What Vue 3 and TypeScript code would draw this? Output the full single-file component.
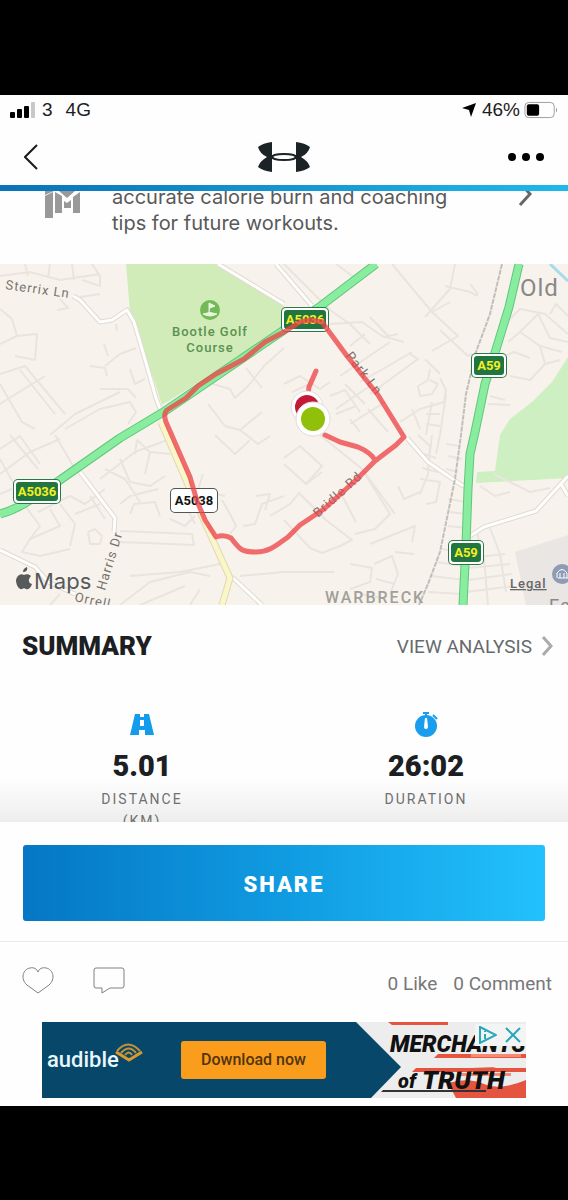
<script setup lang="ts">
interface Stat {
  id: 'distance' | 'duration'
  value: string
  label: string
  unit: string
}

interface RoadSign {
  x: number
  y: number
  width: number
  code: string
  primary: boolean
}

const stats: Stat[] = [
  { id: 'distance', value: '5.01', label: 'DISTANCE', unit: '(KM)' },
  { id: 'duration', value: '26:02', label: 'DURATION', unit: '' },
]

const signs: RoadSign[] = [
  { x: 281, y: 43, width: 48, code: 'A5036', primary: true },
  { x: 471, y: 89, width: 36, code: 'A59', primary: true },
  { x: 13, y: 215, width: 48, code: 'A5036', primary: true },
  { x: 170, y: 224, width: 48, code: 'A5038', primary: false },
  { x: 448, y: 276, width: 36, code: 'A59', primary: true },
]

const streets: string[] = [
  'M0 12L30 8 60 16 100 10M25 0L28 12M50 0L48 14M72 0L74 16M92 0L100 12 100 22 82 16M100 30L80 33M60 35L68 44 57 46M116 60L117 67',
  'M0 45L12 55 17 72 0 80M17 72L37 70 35 96 15 92M90 102L105 104 107 112M105 102L120 90 136 84M104 80L108 92',
  'M0 110L25 102 65 150M0 140L45 112M20 106L55 150M0 120L22 158 35 165M50 171L75 150 120 128M65 165L100 145 130 138 136 148 128 160M100 125L128 125 136 134M130 105L135 120 145 115',
  'M0 185L20 172 40 200M0 210L30 188 60 175M10 171L38 205M55 171L75 205M0 195L15 222M0 230L12 225M20 235L40 262 30 275 22 288 40 292 70 285M38 248L70 232 85 240 105 225M60 240L75 260 70 282M50 245L60 262 30 275M90 232L105 255M75 250L100 240',
  'M100 215L135 188 170 175M105 205L125 215 140 238M120 195L130 218 150 222 165 212M135 190L137 176 150 188 145 210M150 188L170 190M120 240L130 232 158 225M130 250L134 240 155 238 160 252M88 268L95 265 102 272 100 280 90 280 88 268M120 267L192 270 194 281 120 278M170 255L185 262 195 252M185 240L195 260',
  'M130 312L180 308 220 300M120 341L150 318 190 308 210 312M140 341L185 322M50 341L60 330M190 341L200 325M240 312L284 308 334 308',
  'M213 120L230 125 235 134 248 122 264 102 284 84M246 104L262 124M208 140L225 162 240 166 262 148M215 171L235 190 250 176M240 166L258 180 270 172',
  'M222 236L230 250 236 262 230 270M203 210L198 226 225 232M243 262L255 260 262 240 284 232M256 232L270 230 265 246M270 252L290 240 300 228',
  'M284 0L330 46 350 60 370 80M336 0L355 14 372 0M392 0L432 48 458 72 432 87M455 0L450 25 425 53M470 20L478 30M432 48L450 38M445 22L470 28 478 32M440 66L468 92 472 90',
  'M330 60L362 58 382 72 404 78M370 53L388 72 398 70 M350 82L365 70M340 112L365 95 390 78M360 118L395 98 412 88M370 130L418 95 410 90M345 120L365 140M336 145L370 122M350 160L385 138M430 105L428 116 418 122 420 132 432 130 438 120 430 116M425 95L440 110',
  'M440 114L446 126 444 138 420 145 400 158M446 130L440 171M432 138L426 171M412 145L420 165M440 150L426 150M440 162L426 160M284 120L300 112 320 125 330 118M292 128L310 120M330 132L345 126 360 148M336 150L356 142M368 145L388 168M350 155L360 168',
  'M510 55L520 45 545 50 568 70M508 78L520 68 540 82 545 100 530 116 510 112M520 68L538 50 550 74 568 78M540 82L562 88M498 95L514 88 530 94M488 140L510 141M550 50L556 40 568 52M490 132L505 136M545 100L560 96',
  'M284 194L300 182 322 202 306 220 284 200M306 220L322 208M320 171L362 205 390 250 375 265 355 270M300 230L326 256 352 276 340 282 322 289 310 284 284 256M362 205L395 250M340 228L356 258M370 280L415 262 412 278M395 288L414 290',
  'M350 300L372 304 370 318 350 325M374 300L392 292 398 310 390 330M376 315L395 320M360 330L382 334M398 222L404 235 420 228M418 171L430 182 428 210 420 230M432 171L428 205M440 171L436 190M420 215L440 218 436 238 426 240M424 190L436 194M422 204L438 208',
  'M446 180L460 182M448 192L462 195M446 205L458 208M448 235L466 238M450 248L466 250M448 262L466 264M440 285L464 288M436 298L464 302M432 312L464 316M428 328L462 330M470 294L505 290M468 304L510 300M468 316L512 310M466 328L514 322M478 270L480 292M490 264L500 290M484 294L488 341M500 290L506 328M480 222L495 232 510 228M494 210L510 218 530 228 550 224',
]

function signTextX(sign: RoadSign): number {
  return sign.x + sign.width / 2
}
</script>

<template>
  <div class="screen">
    <div class="phone">
      <header class="top">
        <div class="status">
          <div class="status-group">
            <svg class="signal" viewBox="0 0 26 16" aria-hidden="true">
              <rect x="0" y="10" width="5" height="6" rx="1" />
              <rect x="7" y="7" width="5" height="9" rx="1" />
              <rect x="14" y="4" width="5" height="12" rx="1" />
              <rect x="21" y="0" width="4" height="16" rx="1" fill="#c8c8c8" />
            </svg>
            <span>3</span>
            <span class="network">4G</span>
          </div>
          <div class="status-group">
            <svg class="locator" viewBox="0 0 14 14" aria-hidden="true"><path d="M14 0L9 14 7 7 0 5z" /></svg>
            <span class="percent">46%</span>
            <svg class="battery" viewBox="0 0 36 18" aria-hidden="true">
              <rect x="1" y="1" width="31" height="16" rx="4" fill="none" stroke="#999" />
              <rect x="3" y="3" width="13" height="12" rx="2" />
              <path d="M34 6q2 3 0 6z" fill="#888" />
            </svg>
          </div>
        </div>
        <nav class="nav">
          <button type="button" class="icon-button" aria-label="Back">
            <svg class="back" viewBox="0 0 14 26"><path d="M13 1L1 13 13 25" fill="none" stroke="#171b1d" stroke-width="2" /></svg>
          </button>
          <svg class="brand" viewBox="0 0 54 32" role="img" aria-label="Under Armour">
            <path d="M15 1Q6 2 1 6 3 13 10 16 3 20 1 26 6 30 15 31V18L17 16 15 14zM39 1Q48 2 53 6 51 13 44 16 51 20 53 26 48 30 39 31V18L37 16 39 14z" fill="#1c2326" />
            <ellipse cx="27" cy="16" rx="12" ry="3" fill="none" stroke="#1c2326" stroke-width="2" />
          </svg>
          <button type="button" class="icon-button" aria-label="More options">
            <svg class="more" viewBox="0 0 36 8"><circle cx="4" cy="4" r="4" /><circle cx="18" cy="4" r="4" /><circle cx="32" cy="4" r="4" /></svg>
          </button>
        </nav>
      </header>

      <section class="tip">
        <svg class="tip-icon" viewBox="0 0 36 32" aria-hidden="true">
          <path d="M0 10L8 6V32H0zM10 6L17 10V27H10zM19 15L22 17 26 14V22H19zM28 11L35 6V27H28zM0 5H9L0 9zM14 5H30L22 12z" fill="#999" />
        </svg>
        <p class="tip-text">accurate calorie burn and coaching tips for future workouts.</p>
        <svg class="tip-arrow" viewBox="0 0 14 24" aria-hidden="true"><path d="M2 1L12 12 2 23" fill="none" stroke="#666" stroke-width="3" /></svg>
      </section>

      <svg class="map" viewBox="0 0 568 341" role="img" aria-label="Workout route map">
        <rect width="568" height="341" fill="#f7f3ec" />
        <path d="M126 0H218L284 42 284 66 162 141 154 116 142 84 130 48z" fill="#d1ecb9" />
        <path d="M568 93L552 118 532 138 510 155 500 171 495 207 477 208 476 219 568 214z" fill="#cdefc1" />
        <path d="M568 271L515 288 526 341H568z" fill="#e9e6e3" />
        <path d="M550 0L568 17" stroke="#a6daec" stroke-width="3" />

        <g fill="none" stroke="#e9e5de" stroke-width="2" stroke-linejoin="round">
          <path v-for="street in streets" :key="street" :d="street" />
        </g>

        <g fill="none" stroke-linejoin="round">
          <path d="M73 32L80 36 100 58 112 56 127 46 134 58 144 92 156 134 162 150M276 0L312 42M218 0L284 40M80 208L115 254 114 268M0 286L35 303 48 318 75 330M407 174L428 198 460 220 466 223M470 272L484 263 536 247 568 212M561 220L568 232M232 313L262 341" stroke="#dedad4" stroke-width="5" />
          <path d="M73 32L80 36 100 58 112 56 127 46 134 58 144 92 156 134 162 150M276 0L312 42M218 0L284 40M80 208L115 254 114 268M0 286L35 303 48 318 75 330M407 174L428 198 460 220 466 223M470 272L484 263 536 247 568 212M561 220L568 232M232 313L262 341" stroke="#fffefb" stroke-width="3" />
          <path d="M161 158L192 230 230 314 222 341" stroke="#ded9b6" stroke-width="7" />
          <path d="M161 158L192 230 230 314 222 341" stroke="#fbf6c8" stroke-width="5" />
          <path d="M502 0L490 50 476 88 466 130 461 171 455 215 440 288 428 320 419 341" stroke="#c2bfbb" stroke-width="2" stroke-dasharray="5 1" />
          <path d="M0 250Q15 246 30 236T60 216L120 174 165 147 284 66 318 44 376 0" stroke="#62c57d" stroke-width="9" />
          <path d="M0 250Q15 246 30 236T60 216L120 174 165 147 284 66 318 44 376 0" stroke="#89eda0" stroke-width="7" />
          <path d="M519 0L509 43 494 92 485 120 475 168 470 190 468 225 466 280 463 341" stroke="#62c57d" stroke-width="9" />
          <path d="M519 0L509 43 494 92 485 120 475 168 470 190 468 225 466 280 463 341" stroke="#89eda0" stroke-width="7" />
        </g>

        <circle cx="210" cy="46" r="10" fill="#73b957" />
        <path d="M209 51V39L215 42 210 44M203 50Q210 47 217 50 210 54 203 50" fill="#e8f5df" stroke="#e8f5df" />

        <g class="place">
          <text x="210" y="72">Bootle Golf</text>
          <text x="210" y="88">Course</text>
        </g>

        <g v-for="sign in signs" :key="`${sign.code}-${sign.x}`">
          <rect :x="sign.x" :y="sign.y" :width="sign.width" height="25" rx="5" :fill="sign.primary ? '#28784a' : '#555'" />
          <rect :x="sign.x + 1" :y="sign.y + 1" :width="sign.width - 2" height="23" rx="4" fill="#fff" />
          <rect v-if="sign.primary" :x="sign.x + 3" :y="sign.y + 3" :width="sign.width - 6" height="19" rx="3" fill="#21763f" />
          <text class="sign" :x="signTextX(sign)" :y="sign.y + 17" :fill="sign.primary ? '#f4ee25' : '#111'">{{ sign.code }}</text>
        </g>

        <g class="street">
          <text transform="translate(5 25) rotate(8)">Sterrix Ln</text>
          <text transform="translate(345 92) rotate(52)">Park Ln</text>
          <text transform="translate(318 254) rotate(-42)">Bridle Rd</text>
          <text transform="translate(105 327) rotate(-73)">Harris Dr</text>
          <text transform="translate(74 337) rotate(12)">Orrell</text>
        </g>

        <path d="M322 58L310 56 300 58 284 68 265 78 244 95 216 110 198 122 186 134 167 146Q163 150 166 158L190 213 197 237 205 256 216 273Q224 270 231 274C240 286 242 288 256 288 270 288 278 280 288 273L300 261 324 245 356 216 375 197 396 181 404 173 378 131 347 92 322 58M375 196Q370 188 358 183L340 178 325 171M316 107L309 123 307 138" fill="none" stroke="#ee4448" stroke-opacity=".78" stroke-width="5" stroke-linecap="round" stroke-linejoin="round" />

        <text class="town" x="520" y="32">Old</text>
        <text class="district" x="325" y="339">WARBRECK</text>
        <text class="town small" x="549" y="348">Ea</text>
        <circle cx="562" cy="310" r="10" fill="#8d9bb7" />
        <path d="M557 314V309Q562 302 567 309V314M558 314H568M560 309V314M564 309V314" fill="none" stroke="#fff" />

        <circle cx="307" cy="143" r="16" fill="#fff" stroke="#ddd" />
        <circle cx="307" cy="143" r="12" fill="#c51938" />
        <circle cx="313" cy="155" r="17" fill="#fff" stroke="#ddd" />
        <circle cx="313" cy="155" r="12" fill="#91c00b" />

        <path d="M24 311c2-1 5-1 7 1-3 3-3 7 1 8-1 4-4 6-6 5-2-1-2-1-4 0-3 1-6-4-6-9 1-5 5-7 8-5zM23 308c0-3 2-4 4-5 1 3-1 5-4 5z" fill="#58595b" />
        <text class="attribution" x="34" y="325">Maps</text>
        <a href="#legal"><text class="legal" x="510" y="324">Legal</text></a>
      </svg>

      <main class="summary">
        <div class="summary-head">
          <h1>SUMMARY</h1>
          <a href="#analysis" class="analysis">
            VIEW ANALYSIS
            <svg class="chevron" viewBox="0 0 12 20" aria-hidden="true"><path d="M2 1L10 10 2 19" fill="none" stroke="#aaa" stroke-width="3" /></svg>
          </a>
        </div>
        <div class="stats">
          <div v-for="stat in stats" :key="stat.id" class="stat">
            <svg v-if="stat.id === 'distance'" class="stat-icon" viewBox="0 0 24 26" aria-hidden="true">
              <path d="M5 2H10V5H14V2H19L24 23H15V18H9V23H0zM10 8V14H14V8z" fill="#129ceb" fill-rule="evenodd" />
            </svg>
            <svg v-else class="stat-icon" viewBox="0 0 24 26" aria-hidden="true">
              <circle cx="12" cy="14" r="11" fill="#189eec" />
              <path d="M9 1H15M12 1V5M19 3L23 7" stroke="#189eec" stroke-width="2" />
              <path d="M11 6H13L14 15A2 2 0 0 1 10 15z" fill="#fff" />
            </svg>
            <strong>{{ stat.value }}</strong>
            <span class="stat-label">{{ stat.label }}<br />{{ stat.unit }}</span>
          </div>
        </div>
      </main>

      <div class="share-panel">
        <button type="button" class="share">SHARE</button>
      </div>

      <section class="social">
        <button type="button" class="icon-button" aria-label="Like">
          <svg class="heart" viewBox="0 0 32 28"><path d="M16 26L5 18C-2 12 1 2 8 1 12 0 15 2 16 5 17 2 20 0 24 1 31 2 34 12 27 18z" fill="none" stroke="#808080" /></svg>
        </button>
        <button type="button" class="icon-button" aria-label="Comment">
          <svg class="bubble" viewBox="0 0 32 28"><path d="M3 1H29Q31 1 31 3V19Q31 21 29 21H17L9 26V21H3Q1 21 1 19V3Q1 1 3 1z" fill="none" stroke="#808080" /></svg>
        </button>
        <div class="counts"><span>0 Like</span><span>0 Comment</span></div>
      </section>

      <aside class="ad">
        <div class="ad-brand">
          <span>audible</span>
          <svg class="ad-mark" viewBox="0 0 28 20" aria-hidden="true">
            <path d="M1 9L14 17 27 9" fill="none" stroke="#d99a2c" stroke-width="3" />
            <path d="M2 8Q13-5 25 8M6 10Q14 1 21 10M10 12Q14 7 17 12" fill="none" stroke="#c59138" stroke-width="2" />
          </svg>
        </div>
        <a href="#download" class="download">Download now</a>
        <div class="book">
          <svg class="cover" viewBox="0 0 170 76" role="img" aria-label="Merchants of Truth">
            <path d="M0 0H170V76H15L45 45z" fill="#ededed" />
            <path d="M32 0H92V3H36zM82 32H170V36H78zM60 46H170V50H56zM92 61Q112 55 128 62T170 58V76H100z" fill="#e4543f" />
            <path d="M105 51H155V54H100zM115 32H165V35H115z" fill="#f58b75" />
            <path d="M27 68H130V70H25z" fill="#333" />
            <g class="cover-title">
              <text x="34" y="30">MERCHANTS</text>
              <text class="of" x="42" y="66">of</text>
              <text class="truth" x="66" y="67">TRUTH</text>
            </g>
            <path d="M92 47L137 45 150 49 88 50z" fill="#e4543f" fill-opacity=".8" />
          </svg>
          <div class="ad-controls">
            <button type="button" aria-label="About this ad">
              <svg viewBox="0 0 18 18"><path d="M1 1L17 9 1 17zM6 8V13M6 5V6" fill="none" stroke="#27a9bb" stroke-width="2" /></svg>
            </button>
            <button type="button" aria-label="Close ad">
              <svg viewBox="0 0 18 18"><path d="M2 2L16 16M16 2L2 16" fill="none" stroke="#27a9bb" stroke-width="2" /></svg>
            </button>
          </div>
        </div>
      </aside>
    </div>
  </div>
</template>

<style>
body {
  margin: 0;
  background: #000;
}
</style>

<style scoped>
* {
  box-sizing: border-box;
}
.screen {
  padding: 95px 0;
  background: #000;
  color: #1c2022;
  font-family: Inter, "Liberation Sans", sans-serif;
}
.phone {
  background: #fefefe;
  overflow: hidden;
  padding-bottom: 8px;
}
svg {
  display: block;
  flex-shrink: 0;
}
.icon-button,
.ad-controls button {
  padding: 0;
  border: 0;
  background: none;
  cursor: pointer;
}
.top {
  border-bottom: 6px solid;
  border-image: linear-gradient(90deg, #0a72b8, #1fb8ec) 1;
}
.status {
  display: flex;
  justify-content: space-between;
  align-items: center;
  height: 30px;
  padding: 0 10px;
  font: 19px/30px "Liberation Sans", sans-serif;
}
.status-group {
  display: flex;
  align-items: center;
}
.signal {
  width: 26px;
  height: 16px;
  margin-right: 6px;
}
.network {
  margin-left: 13px;
}
.locator {
  width: 14px;
  height: 14px;
  margin-right: 6px;
}
.percent {
  margin-right: 4px;
}
.battery {
  width: 34px;
  height: 18px;
}
.nav {
  display: flex;
  justify-content: space-between;
  align-items: center;
  height: 60px;
  padding: 4px 24px 0;
}
.back {
  width: 14px;
  height: 26px;
}
.brand {
  width: 54px;
  height: 32px;
  margin-left: 22px;
}
.more {
  width: 36px;
  height: 8px;
}
.tip {
  display: flex;
  align-items: flex-end;
  height: 73px;
  padding: 0 36px 28px 45px;
  overflow: hidden;
}
.tip-icon {
  width: 36px;
  height: 32px;
  margin-bottom: 18px;
}
.tip-text {
  flex: 1;
  max-width: 350px;
  margin: 0 auto 0 31px;
  color: #595959;
  font-size: 20px;
  line-height: 26px;
}
.tip-arrow {
  width: 14px;
  height: 24px;
  margin-bottom: 30px;
}
.map {
  width: 100%;
  height: auto;
  font-family: Roboto, sans-serif;
}
.place {
  fill: #5b9150;
  font-size: 13px;
  font-weight: 500;
  letter-spacing: 1px;
  text-anchor: middle;
}
.sign {
  font: bold 13px Roboto, sans-serif;
  text-anchor: middle;
}
.street {
  fill: #77736f;
  font-size: 13px;
  letter-spacing: 1px;
}
.town {
  fill: #888;
  font-size: 24px;
  letter-spacing: 1px;
}
.small {
  font-size: 18px;
}
.district {
  fill: #a19f9c;
  font-size: 16px;
  font-weight: 500;
  letter-spacing: 2px;
}
.attribution {
  fill: #58595b;
  font: 22px Inter, sans-serif;
}
.legal {
  fill: #666;
  font-size: 13px;
  font-weight: 500;
  letter-spacing: 1px;
  text-decoration: underline;
}
.summary {
  height: 217px;
  overflow: hidden;
  background: linear-gradient(#fefefe 80%, #ededed);
  font-family: Roboto, sans-serif;
}
.summary-head {
  display: flex;
  justify-content: space-between;
  align-items: center;
  height: 82px;
  padding: 0 15px 0 22px;
}
h1 {
  margin: 0;
  font-size: 26px;
  font-weight: 900;
}
.analysis {
  display: flex;
  align-items: center;
  gap: 9px;
  color: #666a6d;
  font-size: 19px;
  text-decoration: none;
}
.chevron {
  width: 12px;
  height: 20px;
}
.stats {
  display: grid;
  grid-template-columns: 1fr 1fr;
  padding-top: 25px;
}
.stat {
  display: flex;
  flex-direction: column;
  align-items: center;
}
.stat-icon {
  width: 24px;
  height: 26px;
}
.stat strong {
  margin-top: 10px;
  font-size: 29px;
  font-weight: 900;
  line-height: 36px;
}
.stat-label {
  margin-top: 4px;
  color: #707070;
  font-size: 14px;
  line-height: 22px;
  letter-spacing: 2px;
  text-align: center;
}
.share-panel {
  padding: 23px 23px 20px;
  border-bottom: 1px solid #e9e9e9;
}
.share {
  display: block;
  width: 100%;
  height: 76px;
  padding: 2px 0 0;
  border: 0;
  border-radius: 3px;
  background: linear-gradient(90deg, #0577c5, #109be1 50%, #22c1fd);
  color: #fff;
  font: 900 22px Roboto, sans-serif;
  letter-spacing: 2px;
}
.social {
  display: flex;
  align-items: center;
  height: 80px;
  padding: 0 16px 2px 22px;
}
.heart,
.bubble {
  width: 32px;
  height: 28px;
}
.bubble {
  margin-left: 39px;
}
.counts {
  display: flex;
  gap: 16px;
  margin-left: auto;
  padding-top: 4px;
  color: #777;
  font: 19px Roboto, sans-serif;
}
.ad {
  display: flex;
  align-items: center;
  height: 76px;
  margin: 0 42px;
  padding-left: 5px;
  overflow: hidden;
  background: #074769;
}
.ad-brand {
  display: flex;
  color: #e8f7fd;
  font: 500 22px/34px Roboto, sans-serif;
}
.ad-mark {
  width: 28px;
  height: 20px;
  margin-left: -4px;
}
.download {
  width: 145px;
  margin: 0 0 0 auto;
  border-radius: 3px;
  background: #fa9c1c;
  color: #51340d;
  font: 500 16px/38px Roboto, sans-serif;
  text-align: center;
  text-decoration: none;
}
.book {
  position: relative;
  width: 170px;
  height: 76px;
  margin-left: 30px;
  flex-shrink: 0;
}
.cover {
  width: 170px;
  height: 76px;
}
.cover-title {
  fill: #111;
  font: italic 900 23px Roboto, sans-serif;
}
.of {
  font-size: 20px;
}
.truth {
  font-size: 26px;
}
.ad-controls {
  position: absolute;
  top: 2px;
  right: 0;
  display: flex;
  gap: 7px;
  padding: 2px 4px;
  background: #f4f4f4;
}
.ad-controls svg {
  width: 18px;
  height: 18px;
}
</style>
